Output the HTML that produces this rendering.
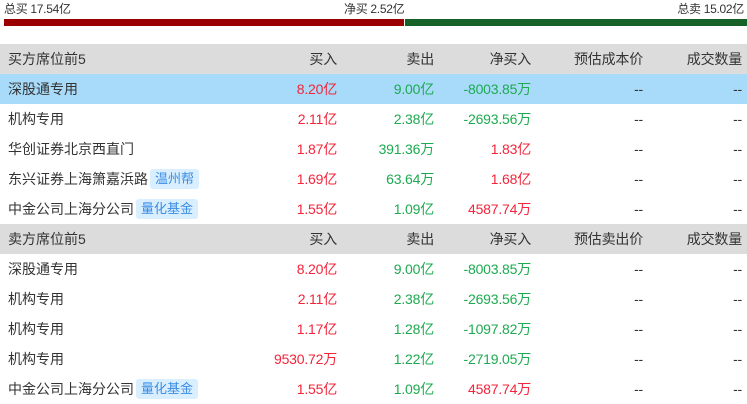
<!DOCTYPE html>
<html><head><meta charset="utf-8"><style>
body{margin:0;width:747px;height:402px;overflow:hidden;background:#fff;font-family:"Liberation Sans","Noto Sans CJK SC",sans-serif;font-size:14px;color:#333;position:relative}
.top{position:absolute;top:0;font-size:12px;line-height:18px;color:#333;letter-spacing:-0.3px}
.bar{position:absolute;top:19px;height:7px}
.row{position:absolute;left:0;width:747px;height:30px;line-height:30px}
.h{background:#dcdcdc}
.sel{background:#a8dbfa}
.c{position:absolute;top:0;text-align:right;white-space:nowrap;letter-spacing:-0.2px}
.n{left:8px;text-align:left;letter-spacing:0}
.c1{right:410px}.c2{right:313px}.c3{right:216px}.c4{right:104px}.c5{right:5px}
.r{color:#f5243a}.g{color:#1daa50}
.tag{display:inline-block;background:#d9eeff;color:#3a8ee6;font-size:13px;line-height:20px;padding:0 5px;border-radius:3px;margin-left:2px;vertical-align:1px}
</style></head><body>
<div class="top" style="left:4px">总买 17.54亿</div>
<div class="top" style="left:344px">净买 2.52亿</div>
<div class="top" style="right:3px">总卖 15.02亿</div>
<div class="bar" style="left:4px;width:400px;background:#9b0000"></div>
<div class="bar" style="left:405px;width:342px;background:#156128"></div>

<div class="row h" style="top:44px"><span class="c n">买方席位前5</span><span class="c c1">买入</span><span class="c c2">卖出</span><span class="c c3">净买入</span><span class="c c4">预估成本价</span><span class="c c5">成交数量</span></div>
<div class="row sel" style="top:74px"><span class="c n">深股通专用</span><span class="c c1 r">8.20亿</span><span class="c c2 g">9.00亿</span><span class="c c3 g">-8003.85万</span><span class="c c4">--</span><span class="c c5">--</span></div>
<div class="row" style="top:104px"><span class="c n">机构专用</span><span class="c c1 r">2.11亿</span><span class="c c2 g">2.38亿</span><span class="c c3 g">-2693.56万</span><span class="c c4">--</span><span class="c c5">--</span></div>
<div class="row" style="top:134px"><span class="c n">华创证券北京西直门</span><span class="c c1 r">1.87亿</span><span class="c c2 g">391.36万</span><span class="c c3 r">1.83亿</span><span class="c c4">--</span><span class="c c5">--</span></div>
<div class="row" style="top:164px"><span class="c n">东兴证券上海箫嘉浜路<span class="tag">温州帮</span></span><span class="c c1 r">1.69亿</span><span class="c c2 g">63.64万</span><span class="c c3 r">1.68亿</span><span class="c c4">--</span><span class="c c5">--</span></div>
<div class="row" style="top:194px"><span class="c n">中金公司上海分公司<span class="tag">量化基金</span></span><span class="c c1 r">1.55亿</span><span class="c c2 g">1.09亿</span><span class="c c3 r">4587.74万</span><span class="c c4">--</span><span class="c c5">--</span></div>
<div class="row h" style="top:224px"><span class="c n">卖方席位前5</span><span class="c c1">买入</span><span class="c c2">卖出</span><span class="c c3">净买入</span><span class="c c4">预估卖出价</span><span class="c c5">成交数量</span></div>
<div class="row" style="top:254px"><span class="c n">深股通专用</span><span class="c c1 r">8.20亿</span><span class="c c2 g">9.00亿</span><span class="c c3 g">-8003.85万</span><span class="c c4">--</span><span class="c c5">--</span></div>
<div class="row" style="top:284px"><span class="c n">机构专用</span><span class="c c1 r">2.11亿</span><span class="c c2 g">2.38亿</span><span class="c c3 g">-2693.56万</span><span class="c c4">--</span><span class="c c5">--</span></div>
<div class="row" style="top:314px"><span class="c n">机构专用</span><span class="c c1 r">1.17亿</span><span class="c c2 g">1.28亿</span><span class="c c3 g">-1097.82万</span><span class="c c4">--</span><span class="c c5">--</span></div>
<div class="row" style="top:344px"><span class="c n">机构专用</span><span class="c c1 r">9530.72万</span><span class="c c2 g">1.22亿</span><span class="c c3 g">-2719.05万</span><span class="c c4">--</span><span class="c c5">--</span></div>
<div class="row" style="top:374px"><span class="c n">中金公司上海分公司<span class="tag">量化基金</span></span><span class="c c1 r">1.55亿</span><span class="c c2 g">1.09亿</span><span class="c c3 r">4587.74万</span><span class="c c4">--</span><span class="c c5">--</span></div>
</body></html>
